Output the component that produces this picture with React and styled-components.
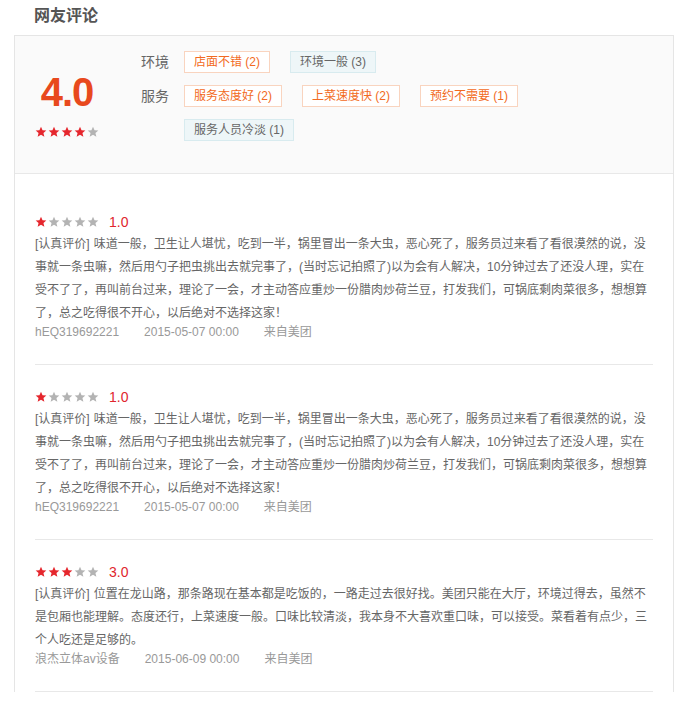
import React from 'react'
import styled, { createGlobalStyle } from 'styled-components'

const GlobalStyle = createGlobalStyle`
    body {
        margin: 0;
        background: #fff;
        font-family: "Liberation Sans", "Noto Sans CJK SC", sans-serif;
    }
`

const Page = styled.div`
    width: 688px;
    padding-left: 14px;
    box-sizing: border-box;
`

const Title = styled.h3`
    margin: 0;
    height: 35px;
    padding-left: 20px;
    line-height: 32px;
    font-size: 16px;
    font-weight: bold;
    color: #555;
`

const Card = styled.div`
    width: 660px;
    box-sizing: border-box;
    border: 1px solid #e5e5e5;
    border-bottom: none;
`

const Summary = styled.div`
    display: flex;
    align-items: flex-start;
    background: #fafafa;
    border-bottom: 1px solid #e8e8e8;
    padding: 15px 20px 32px 20px;
`

const ScoreBox = styled.div`
    width: 64px;
    margin-right: 42px;
    padding-top: 19px;
    display: flex;
    flex-direction: column;
    align-items: center;
`

const Score = styled.div`
    font-size: 40px;
    line-height: 44px;
    font-weight: bold;
    letter-spacing: -1px;
    color: #e8491d;
`

const Categories = styled.div`
    display: flex;
    flex-direction: column;
    gap: 12px;
`

const CategoryRow = styled.div`
    display: flex;
    align-items: flex-start;
`

const Label = styled.span`
    width: 28px;
    margin-right: 15px;
    flex-shrink: 0;
    font-size: 14px;
    line-height: 22px;
    color: #666;
`

const Tags = styled.div`
    display: flex;
    flex-wrap: wrap;
    gap: 12px 20px;
    max-width: 440px;
`

const Tag = styled.span`
    display: inline-block;
    height: 22px;
    box-sizing: border-box;
    padding: 0 9px;
    font-size: 12px;
    line-height: 20px;
    white-space: nowrap;
    border: 1px solid ${p => (p.$good ? '#f9d4bf' : '#d8ebef')};
    background: ${p => (p.$good ? '#fff' : '#eef6f8')};
    color: ${p => (p.$good ? '#f26a22' : '#666')};
`

const List = styled.div`
    padding: 16px 20px 0 20px;
`

const Review = styled.div`
    padding: 20px 0 25px 0;
    border-bottom: 1px solid #e8e8e8;
`

const RatingRow = styled.div`
    display: flex;
    align-items: center;
    height: 23px;
`

const RatingNum = styled.span`
    margin-left: 10px;
    font-size: 14px;
    color: #e0262d;
`

const Body = styled.p`
    margin: 0;
    width: 612px;
    font-size: 12px;
    line-height: 23px;
    word-spacing: 0.8px;
    color: #666;
    word-break: break-all;
    text-spacing-trim: space-all;
`

const Meta = styled.div`
    display: flex;
    height: 14px;
    font-size: 12px;
    line-height: 14px;
    color: #999;
    & span {
        margin-right: 25px;
    }
`

const StarRow = styled.div`
    display: flex;
    gap: 1px;
    margin-top: ${p => p.$mt || 0}px;
`

const Star = ({ on }) => (
    <svg width="12" height="12" viewBox="0 0 24 24">
        <path
            d="M12 1.5l3.1 7.1 7.6.6-5.8 5 1.8 7.5L12 17.7l-6.7 4 1.8-7.5-5.8-5 7.6-.6z"
            fill={on ? '#e5262d' : '#b3b3b3'}
        />
    </svg>
)

const Stars = ({ value, mt }) => (
    <StarRow $mt={mt}>
        {[1, 2, 3, 4, 5].map(i => (
            <Star key={i} on={i <= value} />
        ))}
    </StarRow>
)

const badText = '[认真评价] 味道一般，卫生让人堪忧，吃到一半，锅里冒出一条大虫，恶心死了，服务员过来看了看很漠然的说，没事就一条虫嘛，然后用勺子把虫挑出去就完事了，(当时忘记拍照了)以为会有人解决，10分钟过去了还没人理，实在受不了了，再叫前台过来，理论了一会，才主动答应重炒一份腊肉炒荷兰豆，打发我们，可锅底剩肉菜很多，想想算了，总之吃得很不开心，以后绝对不选择这家！'

const reviews = [
    { id: 1, score: 1, text: badText, user: 'hEQ319692221', date: '2015-05-07 00:00' },
    { id: 2, score: 1, text: badText, user: 'hEQ319692221', date: '2015-05-07 00:00' },
    {
        id: 3,
        score: 3,
        text: '[认真评价] 位置在龙山路，那条路现在基本都是吃饭的，一路走过去很好找。美团只能在大厅，环境过得去，虽然不是包厢也能理解。态度还行，上菜速度一般。口味比较清淡，我本身不大喜欢重口味，可以接受。菜看着有点少，三个人吃还是足够的。',
        user: '浪杰立体av设备',
        date: '2015-06-09 00:00',
    },
]

const categories = [
    { label: '环境', tags: [['店面不错 (2)', true], ['环境一般 (3)', false]] },
    {
        label: '服务',
        tags: [
            ['服务态度好 (2)', true],
            ['上菜速度快 (2)', true],
            ['预约不需要 (1)', true],
            ['服务人员冷淡 (1)', false],
        ],
    },
]

const App = () => {
    return (
        <Page>
            <GlobalStyle />
            <Title>网友评论</Title>
            <Card>
                <Summary>
                    <ScoreBox>
                        <Score>4.0</Score>
                        <Stars value={4} mt={12} />
                    </ScoreBox>
                    <Categories>
                        {categories.map(c => (
                            <CategoryRow key={c.label}>
                                <Label>{c.label}</Label>
                                <Tags>
                                    {c.tags.map(([t, good]) => (
                                        <Tag key={t} $good={good}>{t}</Tag>
                                    ))}
                                </Tags>
                            </CategoryRow>
                        ))}
                    </Categories>
                </Summary>
                <List>
                    {reviews.map(r => (
                        <Review key={r.id}>
                            <RatingRow>
                                <Stars value={r.score} />
                                <RatingNum>{r.score.toFixed(1)}</RatingNum>
                            </RatingRow>
                            <Body>{r.text}</Body>
                            <Meta>
                                <span>{r.user}</span>
                                <span>{r.date}</span>
                                <span>来自美团</span>
                            </Meta>
                        </Review>
                    ))}
                </List>
            </Card>
        </Page>
    )
}

export default App
